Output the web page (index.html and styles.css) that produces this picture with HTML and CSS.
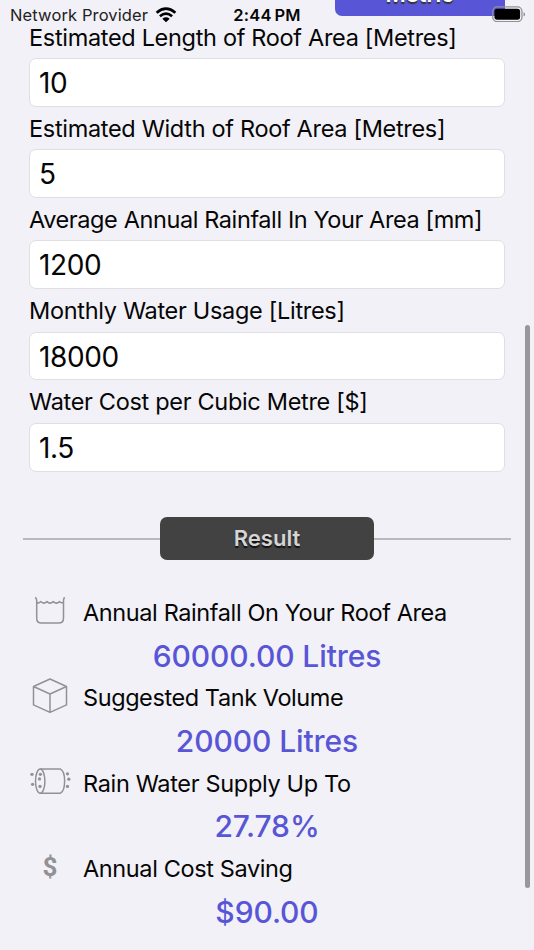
FILE: index.html
```html
<!DOCTYPE html>
<html lang="en">
<head>
<meta charset="utf-8">
<title>Rain Water Calculator</title>
<link rel="stylesheet" href="styles.css">
</head>
<body>
<main class="screen">
  <div class="units"><div class="unit-button">Metric</div></div>
  <form class="form">
    <label class="field"><span class="label l1">Estimated Length of Roof Area [Metres]</span><span class="input">10</span></label>
    <label class="field"><span class="label l2">Estimated Width of Roof Area [Metres]</span><span class="input">5</span></label>
    <label class="field"><span class="label l3">Average Annual Rainfall In Your Area [mm]</span><span class="input">1200</span></label>
    <label class="field"><span class="label l4">Monthly Water Usage [Litres]</span><span class="input">18000</span></label>
    <label class="field"><span class="label l5">Water Cost per Cubic Metre [$]</span><span class="input">1.5</span></label>
  </form>
  <div class="divider"><div class="rule"></div><div class="result-button">Result</div><div class="rule"></div></div>
  <section class="results">
    <div class="result">
      <div class="result-head">
        <svg class="icon" viewBox="0 -1.8 60 50"><path d="M15.3 7.5Q16.7 9 16.7 11V28.5Q16.7 33.3 21.5 33.3H38.7Q43.5 33.3 43.5 28.5V11Q43.5 9 44.6 7.5M16.8 12.2Q18.5 14.2 20.8 11.8Q23.5 14.8 27 11.8Q30 14.8 33.3 11.8Q36.5 14.8 39.5 11.8Q41.5 14 43.4 12.2"/></svg>
        <span class="result-name r1">Annual Rainfall On Your Roof Area</span>
      </div>
      <div class="value">60000.00 Litres</div>
    </div>
    <div class="result">
      <div class="result-head">
        <svg class="icon" viewBox="0 3.3 60 50"><path d="M30 9.3 46.5 16.8V35.2L30 42.7 13.5 35.2V16.8ZM13.5 16.8 30 24.3 46.5 16.8M30 24.3V42.7"/></svg>
        <span class="result-name r2">Suggested Tank Volume</span>
      </div>
      <div class="value">20000 Litres</div>
    </div>
    <div class="result">
      <div class="result-head">
        <svg class="icon" viewBox="0 -1.8 60 50"><path d="M20.2 9.3H40.5C46 12 46 30.5 40.5 33.4H20.2"/><ellipse cx="20.2" cy="21.4" rx="4.7" ry="12.1"/><g class="dots"><circle cx="12" cy="14.5" r="1.65"/><circle cx="12.6" cy="24.5" r="1.65"/><circle cx="20.4" cy="14.5" r="1.65"/><circle cx="19.5" cy="19.1" r="1.65"/><circle cx="20" cy="26.6" r="1.65"/><circle cx="47.5" cy="14" r="1.65"/><circle cx="48.8" cy="19.4" r="1.65"/><circle cx="47.5" cy="26.6" r="1.65"/></g></svg>
        <span class="result-name r3">Rain Water Supply Up To</span>
      </div>
      <div class="value">27.78%</div>
    </div>
    <div class="result">
      <div class="result-head">
        <span class="icon dollar">$</span>
        <span class="result-name r4">Annual Cost Saving</span>
      </div>
      <div class="value">$90.00</div>
    </div>
  </section>
</main>
<header class="status">
  <div class="carrier"><span class="provider">Network Provider</span>
    <svg class="wifi" viewBox="0 0 22 16"><path d="M1.6 5.7Q11-2.3 20.4 5.7M4.9 9.2Q11 4.1 17.1 9.2"/><path class="wifi-dot" d="M11 15.3 7.3 11.7Q11 8.9 14.7 11.7Z"/></svg>
  </div>
  <div class="time">2:44 PM</div>
  <div class="battery-side"><svg class="battery" viewBox="0 0 34 17"><rect class="shell" x=".8" y=".8" width="29.6" height="15" rx="4.5"/><rect x="2.5" y="2.7" width="26" height="11.2" rx="2.7"/><path class="cap" d="M32 6.2Q33.7 6.8 33.7 8.3T32 10.4Z"/></svg></div>
</header>
<div class="scrollbar"></div>
</body>
</html>
```
FILE: styles.css
```css
* { box-sizing: border-box; }
html, body { height: 100%; }
body {
  margin: 0;
  position: relative;
  overflow: hidden;
  background: #f2f1f7;
  color: #060606;
  font-family: Inter, sans-serif;
}
.screen { height: 950px; overflow: hidden; }
.units { display: flex; justify-content: flex-end; height: 15.6px; align-items: flex-end; padding-right: 29px; }
.unit-button {
  flex: none; width: 170.5px; height: 42px; border-radius: 7px; background: #5856d6;
  color: #fff; font-size: 22px; font-weight: 600; line-height: 40px; text-align: center;
  text-shadow: 0 1.5px 1px #333;
}
.form { margin: 0 29px 0 28.5px; }
.field { display: grid; grid-template-rows: 42.5px 48.7px; }
.label { font-size: 23.5px; line-height: 42.5px; white-space: nowrap; padding: 1px 0 0 .5px; }
.l1, .l2, .l5 { letter-spacing: -.32px; }
.l3 { letter-spacing: -.4px; }
.l4 { letter-spacing: -.31px; }
.input {
  display: flex; align-items: center; padding: 1px 9.5px 0; font-size: 28px; letter-spacing: -.4px;
  background: #fff; border: 1px solid #dfdfe3; border-radius: 7px;
}
.divider { display: flex; align-items: center; height: 43px; margin: 45.6px 23px 0; }
.rule { flex: 1; height: 2px; background: #b9b8bc; }
.result-button {
  width: 213.5px; height: 43px; border-radius: 7px; background: #424242; color: #d5d5d5;
  font-size: 22px; font-weight: 600; line-height: 42px; text-align: center;
  text-shadow: 0 2px 1px #111;
}
.results { margin-top: 29.5px; }
.result { height: 85.3px; }
.result-head { display: flex; align-items: center; height: 46px; padding-left: 20px; }
.icon { width: 60px; height: 50px; flex: none; fill: none; stroke: #929196; stroke-width: 1.5; stroke-linejoin: round; }
.dots { fill: #929196; stroke: none; }
.dollar { font-family: Roboto, sans-serif; font-size: 26px; font-weight: 700; color: #929196; text-align: center; line-height: 46px; }
.result-name { font-size: 23.5px; margin-left: 3px; white-space: nowrap; }
.r1 { letter-spacing: -.39px; }
.r2 { letter-spacing: -.42px; }
.r3 { letter-spacing: -.33px; }
.r4 { letter-spacing: -.38px; }
.value { height: 39.3px; line-height: 41px; font-size: 30px; font-weight: 500; letter-spacing: -.1px; color: #5856d6; text-align: center; }
.status {
  position: absolute; top: 0; left: 0; right: 0; height: 30px;
  display: grid; grid-template-columns: 1fr auto 1fr; align-items: center;
}
.carrier { display: flex; align-items: center; padding-left: 10px; gap: 7px; }
.provider { font-size: 16.5px; letter-spacing: .12px; white-space: nowrap; color: #222; }
.wifi { width: 22px; height: 16px; fill: none; stroke: #000; stroke-width: 2.7; }
.wifi-dot { fill: #000; stroke: none; }
.time { font-size: 16.5px; font-weight: 600; letter-spacing: .2px; word-spacing: -1.5px; }
.battery-side { display: flex; justify-content: flex-end; padding-right: 9px; margin-top: -2px; }
.battery { width: 33.5px; height: 16.8px; }
.shell { fill: none; stroke: #929196; stroke-width: 1.3; }
.cap { fill: #929196; }
.scrollbar { position: absolute; top: 325px; right: 4.5px; width: 4.5px; height: 563px; border-radius: 3px; background: #98979c; }
```
